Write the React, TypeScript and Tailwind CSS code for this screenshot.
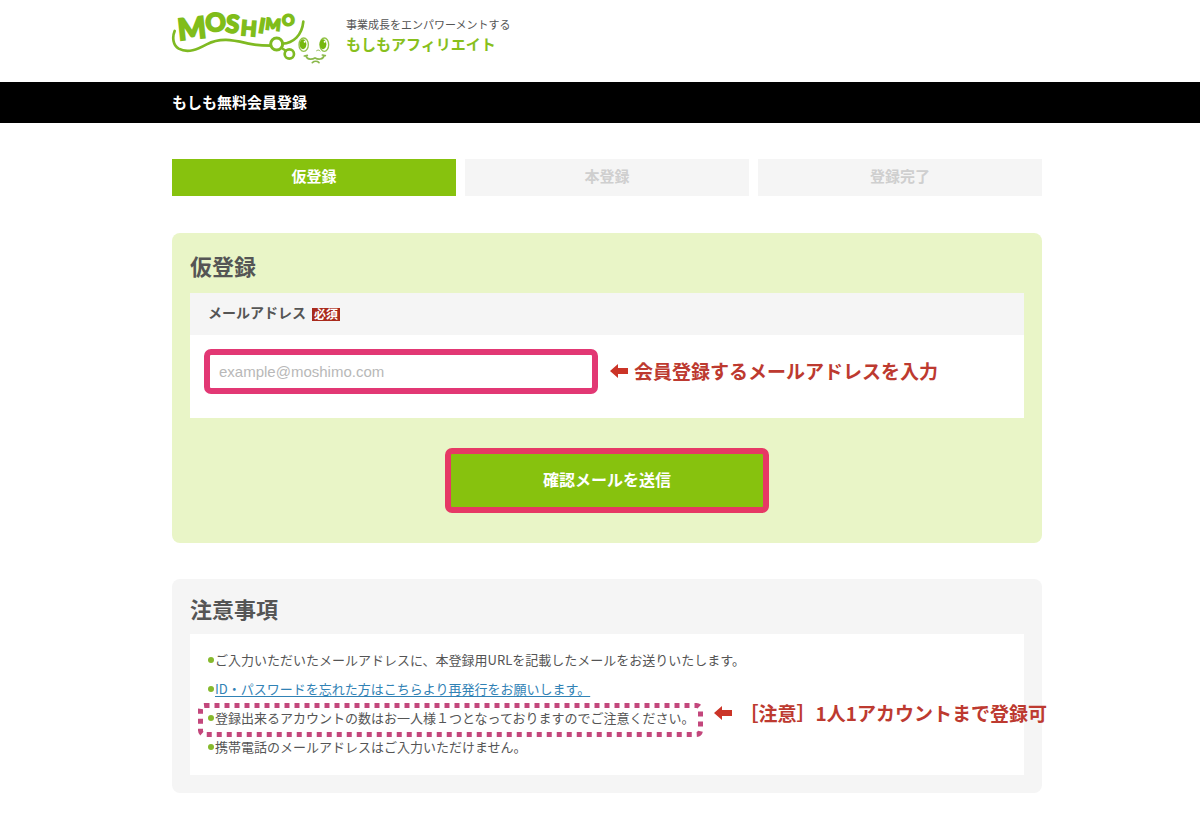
import React from 'react'
import clsx from 'clsx'

const steps = [
  { label: '仮登録', active: true },
  { label: '本登録', active: false },
  { label: '登録完了', active: false },
]

const Container = ({ children }: { children: React.ReactNode }) => (
  <div className="pl-[14px]">
    <div className="mx-auto max-w-[870px]">{children}</div>
  </div>
)

const logoLetters = [
  { char: 'M', x: 99, y: 117, size: 90, angle: -6 },
  { char: 'O', x: 169, y: 94, size: 76, angle: -4 },
  { char: 'S', x: 215, y: 98, size: 74, angle: 6 },
  { char: 'H', x: 265, y: 107, size: 62, angle: 5 },
  { char: 'I', x: 302, y: 98, size: 60, angle: 10 },
  { char: 'M', x: 338, y: 90, size: 48, angle: 6 },
  { char: 'O', x: 386, y: 77, size: 46, angle: -4 },
]

const Logo = () => (
  <svg viewBox="36 30 474 165" className="h-[55px] w-[158px] overflow-visible" role="img" aria-label="MOSHIMO">
    <g
      fill="#80bd1a"
      stroke="#80bd1a"
      strokeWidth="5"
      textAnchor="middle"
      fontWeight="900"
      fontFamily="Lato, sans-serif"
    >
      {logoLetters.map((l, i) => (
        <text key={i} x={l.x} y={l.y} fontSize={l.size} transform={`rotate(${l.angle} ${l.x} ${l.y})`}>
          {l.char}
        </text>
      ))}
    </g>
    <g fill="none" stroke="#7fba22" strokeLinecap="round">
      <path d="M44 93C36 112 39 136 56 146C84 161 112 148 140 133C182 112 216 120 262 130C288 136 308 137 333 137" strokeWidth="8" />
      <path d="M367 131C400 130 426 106 430 65" strokeWidth="8" />
      <circle cx="350" cy="132" r="18" strokeWidth="9" />
      <circle cx="388" cy="162" r="14" strokeWidth="8" />
      <path d="M368 146L378 152" strokeWidth="7" />
    </g>
    {/* Face */}
    <g fill="#fff" stroke="#93c34a" strokeWidth="4">
      <ellipse cx="431" cy="134" rx="14" ry="20" />
      <ellipse cx="493" cy="134" rx="13" ry="20" />
    </g>
    <ellipse cx="429" cy="133" rx="10" ry="15" fill="#76b80e" />
    <ellipse cx="489" cy="133" rx="10" ry="15" fill="#76b80e" />
    <circle cx="434" cy="125" r="3" fill="#fff" />
    <circle cx="494" cy="125" r="3" fill="#fff" />
    <g fill="none" stroke="#8ab84a" strokeWidth="5" strokeLinecap="round">
      <path d="M470 152C475 149 478 150 480 153" strokeWidth="3" />
      <path d="M433 168L442 166M438 168C442 181 458 178 465 174C474 179 490 180 492 166M487 165L496 167" />
      <path d="M457 188C463 183 472 183 477 188" />
    </g>
  </svg>
)

const LeftArrow = () => (
  <svg viewBox="0 0 18 14" className="h-[14px] w-[18px] shrink-0" aria-hidden="true">
    <path d="M0 7L8 0V4H18V10H8V14Z" fill="#cb3427" />
  </svg>
)

const NoteItem = ({ children }: { children: React.ReactNode }) => (
  <li className="flex items-center">
    <span className="mr-px h-[6px] w-[6px] shrink-0 rounded-full bg-[#86b92c]" />
    {children}
  </li>
)

export default function App() {
  return (
    <div className="overflow-x-hidden bg-white pb-8 font-['Noto_Sans_CJK_JP',sans-serif] text-[#555]">
      <header>
        <Container>
          <div className="flex gap-4 pt-[10px] pb-[17px]">
            <a href="#">
              <Logo />
            </a>
            <div className="pt-1">
              <p className="text-[11px] leading-5">事業成長をエンパワーメントする</p>
              <p className="text-[15px] leading-5 font-bold text-[#88c01c]">もしもアフィリエイト</p>
            </div>
          </div>
        </Container>
      </header>

      <div className="bg-black pb-[2px]">
        <Container>
          <h1 className="text-[15px] leading-[39px] font-bold text-white">もしも無料会員登録</h1>
        </Container>
      </div>

      <Container>
        <main className="pt-9">
          <ol className="grid grid-cols-3 gap-[9px]">
            {steps.map((step) => (
              <li
                key={step.label}
                className={clsx(
                  'pb-1 text-center text-[15px] leading-[33px] font-bold',
                  step.active ? 'bg-[#87c20e] text-white' : 'bg-[#f5f5f5] text-[#cfcfcf]'
                )}
              >
                {step.label}
              </li>
            ))}
          </ol>

          {/* Registration form */}
          <form
            className="mt-[37px] rounded-lg bg-[#e9f5c7] px-[18px] pt-4 pb-[30px]"
            onSubmit={(e) => e.preventDefault()}
          >
            <h2 className="pb-3 text-[22px] leading-8 font-bold">仮登録</h2>
            <div className="flex items-center gap-[6px] bg-[#f5f5f5] px-[18px] pb-1 leading-[38px]">
              <label htmlFor="email" className="text-[14px] font-bold">
                メールアドレス
              </label>
              <span className="mt-1 bg-[#a92a1c] px-[2px] pb-[2px] text-[12px] leading-[11px] font-bold text-white">
                必須
              </span>
            </div>
            <div className="flex items-center gap-3 bg-white px-[14px] pt-[14px] pb-6">
              <input
                id="email"
                type="email"
                placeholder="example@moshimo.com"
                className="h-[45px] w-[394px] rounded-[7px] border-[6px] border-[#e23874] px-[9px] font-['Liberation_Sans',sans-serif] text-[15px] outline-none placeholder:text-[#b8b8b8]"
              />
              <p className="flex items-center gap-[6px] pb-[2px] text-[19px] leading-7 font-bold whitespace-nowrap text-[#bd3a30]">
                <LeftArrow />
                会員登録するメールアドレスを入力
              </p>
            </div>
            <div className="mt-[30px] flex justify-center">
              <button
                type="submit"
                className="h-[65px] w-[324px] rounded-[7px] border-[6px] border-[#e63965] bg-[#87c20e] pb-1 text-[16px] font-bold text-white"
              >
                確認メールを送信
              </button>
            </div>
          </form>

          {/* Notes */}
          <section className="mt-9 rounded-lg bg-[#f5f5f5] px-[18px] pt-[13px] pb-[18px]">
            <h2 className="pb-[10px] text-[22px] leading-8 font-bold">注意事項</h2>
            <ul className="bg-white px-[18px] pt-[11px] pb-[14px] text-[13px] leading-[29px]">
              <NoteItem>ご入力いただいたメールアドレスに、本登録用URLを記載したメールをお送りいたします。</NoteItem>
              <NoteItem>
                <a href="#" className="text-[#3182b5] underline underline-offset-2">
                  ID・パスワードを忘れた方はこちらより再発行をお願いします。
                </a>
              </NoteItem>
              <NoteItem>
                <span className="relative whitespace-nowrap">
                  登録出来るアカウントの数はお一人様１つとなっておりますのでご注意ください。
                  <svg
                    className="absolute top-0 -left-[17px] h-[34px] w-[505px] overflow-visible"
                    viewBox="0 0 505 34"
                    aria-hidden="true"
                  >
                    <rect
                      x="2.5"
                      y="2.5"
                      width="500"
                      height="29"
                      rx="4"
                      fill="none"
                      stroke="#c3477c"
                      strokeWidth="5"
                      strokeDasharray="5 5"
                    />
                  </svg>
                  <strong className="absolute -top-1 left-full ml-[19px] flex items-center gap-2 text-[19px] leading-7 text-[#bd3a30]">
                    <LeftArrow />
                    ［注意］1人1アカウントまで登録可
                  </strong>
                </span>
              </NoteItem>
              <NoteItem>携帯電話のメールアドレスはご入力いただけません。</NoteItem>
            </ul>
          </section>
        </main>
      </Container>
    </div>
  )
}
